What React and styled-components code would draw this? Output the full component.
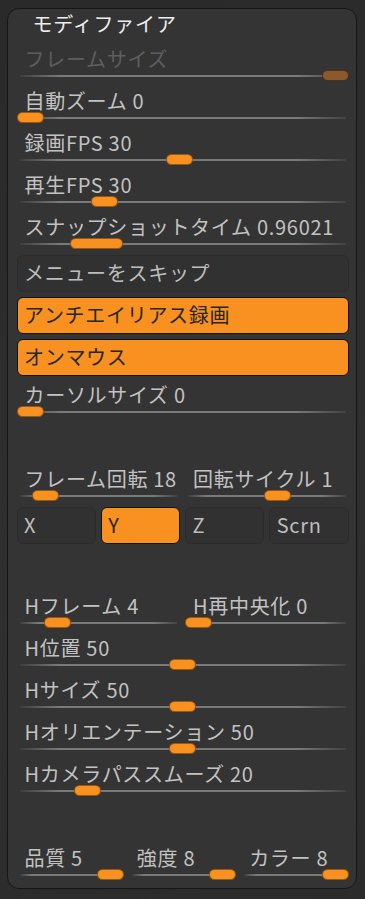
import React from "react";
import styled, { createGlobalStyle } from "styled-components";

const GlobalStyle = createGlobalStyle`
  html, body {
    margin: 0;
    padding: 0;
    background: #2d2d2d;
  }
  body {
    font-family: "Noto Sans CJK JP", "Noto Sans", sans-serif;
  }
`;

const Slider = ({ label, pos = 0, thumb = 25, disabled }) => (
  <SliderBox>
    <Label $disabled={disabled}>{label}</Label>
    <Track>
      <Thumb
        $w={thumb}
        $disabled={disabled}
        style={{ left: `calc(1px + (100% - ${thumb + 2}px) * ${pos})` }}
      />
    </Track>
  </SliderBox>
);

export const App = () => {
  return (
    <Page>
      <GlobalStyle />
      <Panel>
        <Title>モディファイア</Title>

        <Group $top={8.5}>
          <Slider label="フレームサイズ" pos={1} disabled />
          <Slider label="自動ズーム 0" pos={0} />
          <Slider label="録画FPS 30" pos={0.49} />
          <Slider label="再生FPS 30" pos={0.245} />
          <Slider label="スナップショットタイム 0.96021" pos={0.19} thumb={51} />
        </Group>

        <Group $gap={5}>
          <Toggle>メニューをスキップ</Toggle>
          <Toggle $on>アンチエイリアス録画</Toggle>
          <Toggle $on>オンマウス</Toggle>
        </Group>

        <Group $top={7}>
          <Slider label="カーソルサイズ 0" pos={0} />
        </Group>

        <Group $top={44} $gap={0}>
          <Row $cols={2}>
            <Slider label="フレーム回転 18" pos={0.11} />
            <Slider label="回転サイクル 1" pos={0.58} />
          </Row>
          <Row $cols={4}>
            <Toggle>X</Toggle>
            <Toggle $on>Y</Toggle>
            <Toggle>Z</Toggle>
            <Toggle>Scrn</Toggle>
          </Row>
        </Group>

        <Group $top={50}>
          <Row $cols={2}>
            <Slider label="Hフレーム 4" pos={0.2} />
            <Slider label="H再中央化 0" pos={0} />
          </Row>
          <Slider label="H位置 50" pos={0.5} />
          <Slider label="Hサイズ 50" pos={0.5} />
          <Slider label="Hオリエンテーション 50" pos={0.5} />
          <Slider label="Hカメラパススムーズ 20" pos={0.19} />
        </Group>

        <Group $top={44}>
          <Row $cols={3}>
            <Slider label="品質 5" pos={1} />
            <Slider label="強度 8" pos={1} />
            <Slider label="カラー 8" pos={1} />
          </Row>
        </Group>
      </Panel>
    </Page>
  );
};

const Page = styled.div`
  width: 365px;
  height: 899px;
  box-sizing: border-box;
  padding: 8px 0 0 7px;
  background: linear-gradient(160deg, #2a2a2a 0%, #2f2f2f 60%, #2b2b2b 100%);
  overflow: hidden;
`;

const Panel = styled.div`
  width: 350px;
  box-sizing: border-box;
  border: 1.5px solid #161616;
  border-radius: 12px;
  background: #343434;
  padding: 0 7.5px 2px 8.5px;
  display: flex;
  flex-direction: column;
`;

const Title = styled.div`
  height: 29px;
  line-height: 29px;
  padding-left: 16px;
  font-size: 20px;
  letter-spacing: 0.8px;
  color: #ededed;
`;

const Group = styled.div`
  display: flex;
  flex-direction: column;
  gap: ${(p) => (p.$gap ?? 2)}px;
  margin-top: ${(p) => p.$top || 0}px;
`;

const Row = styled.div`
  display: grid;
  grid-template-columns: repeat(${(p) => p.$cols}, 1fr);
  gap: 5px;
`;

const SliderBox = styled.div`
  display: flex;
  flex-direction: column;
  min-width: 0;
`;

const Label = styled.div`
  height: 24px;
  line-height: 24px;
  padding-left: 8px;
  font-size: 20px;
  letter-spacing: 0.7px;
  white-space: nowrap;
  color: ${(p) => (p.$disabled ? "#5e5e5e" : "#c2c2c2")};
`;

const Track = styled.div`
  position: relative;
  height: 16px;
  &::before {
    content: "";
    position: absolute;
    left: 3px;
    right: 3px;
    top: 4.5px;
    height: 1.5px;
    background: linear-gradient(
      90deg,
      rgba(120, 120, 120, 0.15) 0%,
      #7a7a7a 12%,
      #7a7a7a 85%,
      rgba(120, 120, 120, 0.2) 100%
    );
  }
`;

const Thumb = styled.div`
  position: absolute;
  top: 0.8px;
  width: ${(p) => p.$w}px;
  height: 9px;
  border-radius: 5px;
  background: ${(p) => (p.$disabled ? "#8a5a2c" : "#f8911f")};
  box-shadow: 0 0 0 1px ${(p) => (p.$disabled ? "#4a3420" : "#9a5712")};
`;

const Toggle = styled.div`
  height: 37px;
  box-sizing: border-box;
  border-radius: 6px;
  border: 1.5px solid ${(p) => (p.$on ? "#121212" : "#2b2b2b")};
  background: ${(p) => (p.$on ? "#f8911f" : "#313131")};
  color: ${(p) => (p.$on ? "#262626" : "#bdbdbd")};
  padding-left: 6.5px;
  font-size: 20px;
  letter-spacing: 0.7px;
  line-height: 33px;
  white-space: nowrap;
`;

export default App;
